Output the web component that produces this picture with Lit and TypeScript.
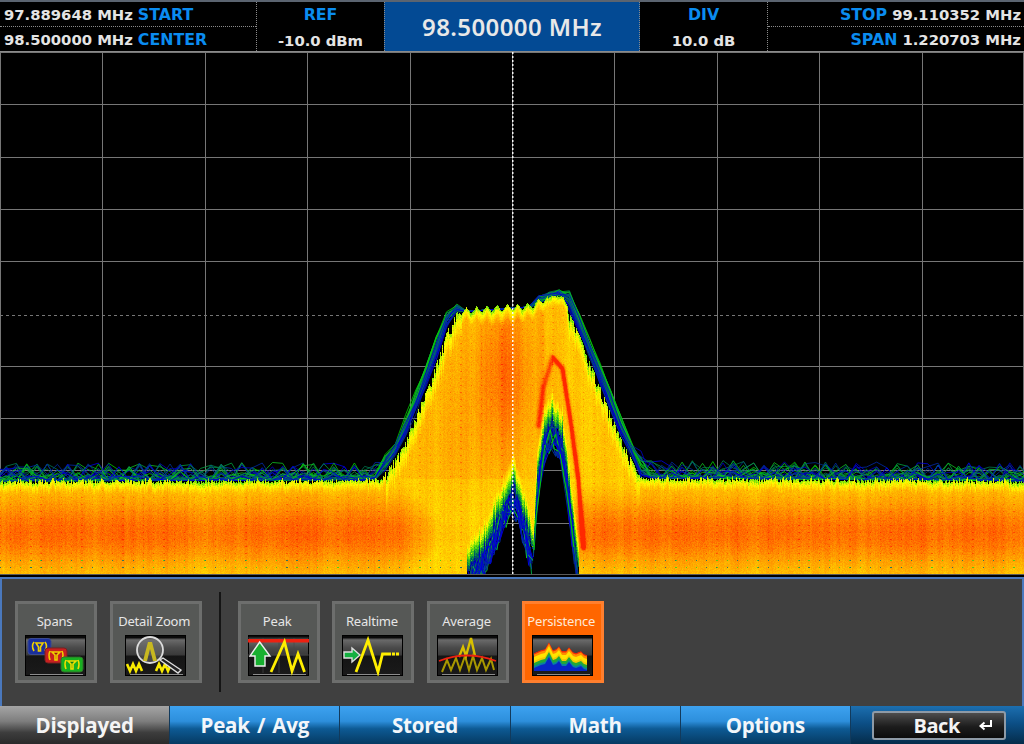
import { LitElement, html, css, svg } from 'lit';
import { customElement } from 'lit/decorators.js';

const PLOT_TOP = 52;
const W = 1024;
const H = 523;

type Pt = [number, number];

const TOP: Pt[] = [[0, 480], [380, 479], [403, 447], [430, 380], [450, 323], [460, 311], [530, 306], [543, 300], [552, 296], [563, 297], [577, 330], [597, 380], [620, 437], [640, 477], [1024, 480]];
const NOTCH: Pt[] = [[466, 575], [487, 547], [503, 507], [513, 487], [520, 507], [533, 553]];
const HOLE: Pt[] = [[533, 553], [537, 480], [543, 440], [552, 423], [562, 440], [567, 480], [573, 530], [579, 575]];
const RED_LINE: Pt[] = [[538, 425], [543, 387], [552, 357], [562, 368], [570, 420], [578, 480], [583, 547]];

function lerpTable(t: Pt[], x: number) {
  if (x <= t[0][0]) return t[0][1];
  for (let i = 1; i < t.length; i++) {
    if (x <= t[i][0]) {
      const k = (x - t[i - 1][0]) / (t[i][0] - t[i - 1][0]);
      return t[i - 1][1] + (t[i][1] - t[i - 1][1]) * k;
    }
  }
  return t[t.length - 1][1];
}

function rng(seed: number) {
  return () => {
    seed = (seed + 0x6d2b79f5) | 0;
    let t = Math.imul(seed ^ (seed >>> 15), 1 | seed);
    t = (t + Math.imul(t ^ (t >>> 7), 61 | t)) ^ t;
    return ((t ^ (t >>> 14)) >>> 0) / 4294967296;
  };
}

const gauss = (v: number) => Math.exp(-v * v);

const STOPS: [number, number, number, number][] = [
  [0, 0, 0, 170],
  [0.14, 0, 130, 70],
  [0.28, 90, 220, 10],
  [0.42, 255, 250, 0],
  [0.72, 255, 150, 0],
  [1, 255, 40, 0],
];

function heatColor(v: number): [number, number, number] {
  if (v <= 0) return [STOPS[0][1], STOPS[0][2], STOPS[0][3]];
  for (let i = 1; i < STOPS.length; i++) {
    if (v <= STOPS[i][0]) {
      const a = STOPS[i - 1];
      const b = STOPS[i];
      const k = (v - a[0]) / (b[0] - a[0]);
      return [a[1] + (b[1] - a[1]) * k, a[2] + (b[2] - a[2]) * k, a[3] + (b[3] - a[3]) * k];
    }
  }
  return [255, 40, 0];
}

function segDist(px: number, py: number, a: Pt, b: Pt) {
  const dx = b[0] - a[0];
  const dy = b[1] - a[1];
  const t = Math.max(0, Math.min(1, ((px - a[0]) * dx + (py - a[1]) * dy) / (dx * dx + dy * dy)));
  return Math.hypot(px - a[0] - t * dx, py - a[1] - t * dy);
}

function drawSpectrum(ctx: CanvasRenderingContext2D) {
  const rand = rng(77);
  ctx.fillStyle = '#000';
  ctx.fillRect(0, 0, W, H);

  // graticule
  ctx.fillStyle = '#767676';
  for (let i = 0; i <= 10; i++) {
    const x = Math.round(i * 102.4);
    ctx.fillRect(Math.min(x, W - 1), 0, 1, H);
  }
  for (let i = 0; i <= 10; i++) {
    const y = Math.round(i * 52.3) - (i === 10 ? 1 : 0);
    if (i === 5) {
      for (let x = 0; x < W; x += 6) ctx.fillRect(x, y + 1, 3, 1);
    } else {
      ctx.fillRect(0, y, W, 1);
    }
  }

  // stray traces above the envelope
  const blues = ['#0000c8', '#0000e0', '#00308c', '#002aa8'];
  const greens = ['#007a50', '#00a040', '#10c020', '#00d000'];
  for (let i = 0; i < 30; i++) {
    const blue = rand() < 0.5;
    const list = blue ? blues : greens;
    const shift = blue ? rand() * 6 : 2 + rand() * 6;
    ctx.strokeStyle = list[Math.floor(rand() * list.length)];
    ctx.lineWidth = 1;
    ctx.globalAlpha = 0.8;
    ctx.beginPath();
    for (let x = -4; x < W + 10; x += 10.24) {
      const jx = x < 500 ? x + shift : x - shift;
      const floor = x < 385 || x > 636;
      const plateau = x > 462 && x < 535;
      const base = lerpTable(TOP, plateau ? x : jx);
      const y = floor ? base + 1 - Math.pow(rand(), 3.5) * 18 : plateau ? base + 1 : base - rand() * 7;
      ctx.lineTo(x, y - PLOT_TOP);
    }
    ctx.stroke();
  }
  ctx.globalAlpha = 1;

  // notch and hole streaks sitting under the density map
  for (let i = 0; i < 50; i++) {
    const t = i < 28 ? NOTCH : HOLE;
    const blue = rand() < 0.7;
    ctx.strokeStyle = (blue ? blues : greens)[Math.floor(rand() * 4)];
    ctx.beginPath();
    for (let x = t[0][0] + rand() * 8; x < t[t.length - 1][0]; x += 3 + rand() * 4) {
      ctx.lineTo(x, lerpTable(t, x) - PLOT_TOP + (rand() - 0.3) * 40);
    }
    ctx.stroke();
  }

  // density map
  const colNoise: number[] = [];
  let walk = 0;
  for (let x = 0; x < W; x++) {
    walk = walk * 0.85 + (rand() - 0.5) * 0.04;
    colNoise.push(walk);
  }
  const img = ctx.getImageData(0, 0, W, H);
  const data = img.data;
  for (let x = 0; x < W; x++) {
    const ripple = x > 445 && x < 548 ? Math.abs(((x % 10.24) / 10.24) * 2 - 1) * 7 - 3.5 : 0;
    const slope = (x > 385 && x < 462) || (x > 566 && x < 640);
    const floorCol = x < 385 || x > 636;
    const top = lerpTable(TOP, x) + ripple + (slope ? Math.pow(rand(), 2) * 11 : floorCol ? 2 - Math.pow(rand(), 2) * 4 + rand() * 3 : rand());
    const inNotch = x > 466 && x < 533;
    const inHole = x >= 533 && x < 579;
    const low = inNotch ? lerpTable(NOTCH, x) : inHole ? lerpTable(HOLE, x) : 999;
    const jag = rand() * 14;
    const stripe = (x + 1) % 10.24 < 1.3;
    const ramp = slope ? 26 : 11;
    for (let py = Math.floor(top); py < PLOT_TOP + H - 1; py++) {
      const dLow = low - py - jag * 0.3;
      if (dLow < 0) continue;
      const dTop = py - top;
      const sig = 0.58 + 0.2 * gauss((x - 505) / 32) * gauss((py - 365) / 80) + 0.07 * gauss((x - 470) / 60) * gauss((py - 430) / 90);
      const wf = x < 400 || x > 585 ? 1 : x < 440 ? 1 - ((x - 400) / 40) * 0.3 : x > 560 ? 0.7 + ((x - 560) / 25) * 0.3 : 0.7;
      const band = (0.53 + 0.29 * gauss((py - 532) / 36)) * wf;
      let v = py > 478 ? Math.max(band, x > 400 && x < 585 ? sig * 0.92 : 0) : sig;
      v = Math.min(v, 0.34 + (dTop / ramp) * 0.3);
      if (dLow < 30) v = Math.min(v, 0.1 + ((dLow - jag * 0.4) / 30) * 0.55);
      v += colNoise[x] + (rand() - 0.5) * 0.09;
      if (stripe && py % 7 === 0 && dTop > 10) v += 0.14;
      if (x > 530 && x < 590 && py > 340) {
        let d = 99;
        for (let i = 1; i < RED_LINE.length; i++) d = Math.min(d, segDist(x, py, RED_LINE[i - 1], RED_LINE[i]));
        const strength = x < 552 ? 0.32 : 0.62;
        v += strength * gauss(d / (x < 552 ? 2.8 : 2.2));
      }
      let c = heatColor(v);
      if (stripe && py > 555 && py < 572 && py % 7 === 0 && !inNotch && !inHole) c = rand() > 0.5 ? [50, 120, 90] : [90, 200, 20];
      const i = ((py - PLOT_TOP) * W + x) * 4;
      data[i] = c[0];
      data[i + 1] = c[1];
      data[i + 2] = c[2];
      data[i + 3] = 255;
    }
  }
  ctx.putImageData(img, 0, 0);

  // the panel image is slightly soft
  ctx.filter = 'blur(0.55px)';
  ctx.drawImage(ctx.canvas, 0, 0);
  ctx.filter = 'none';

  // centre marker
  ctx.fillStyle = 'rgba(255,255,255,.95)';
  for (let y = 0; y < H; y += 4) ctx.fillRect(512, y, 1.5, 2);
  ctx.fillStyle = '#5a5a5a';
  ctx.fillRect(0, H - 1, W, 1);
}

const SPECTRUM_SHAPE = 'M2 18l7-3 4-1 4-7 4 8 3-1 3-3 3 5 4 0 3-4 4 5 3 1 5-2 3 3 3 1v16H2z';
const PERSIST_BANDS: [number, string][] = [
  [0, '#f02808'],
  [1.5, '#ff8c00'],
  [4, '#ffe400'],
  [8, '#f4c800'],
  [10, '#20a838'],
  [13, '#0880a0'],
  [15, '#0824c8'],
];

const icons = {
  spans: svg`
    <rect x="3" y="3.500" width="23" height="16" rx="3" fill="#1a2f9c" stroke="#3a4a90"/>
    <path d="M9 7q-3 4 0 9M20 7q3 4 0 9M11 8h7l-2.500 4v4h-2v-4z" fill="none" stroke="#f0d000" stroke-width="1.600"/>
    <rect x="20" y="13" width="22" height="15" rx="3" fill="#c82020" stroke="#7a2020"/>
    <path d="M25 16q-2 4 0 9M37 16q2 4 0 9M27 17h8l-3 3v5h-2v-5z" fill="#a01010" stroke="#f0d000" stroke-width="1.600"/>
    <rect x="36" y="22" width="22" height="15" rx="3" fill="#18b020" stroke="#30702a"/>
    <path d="M41 25q-2 4 0 9M53 25q2 4 0 9M43 26h8l-3 3v5h-2v-5z" fill="#108018" stroke="#f0e000" stroke-width="1.600"/>`,
  zoom: svg`
    <path d="M2 29l3 7 3-7 3 7 3-7 3 7M31 36l3-7 3 7 3-7 3 7 3-7" fill="none" stroke="#f8ea00" stroke-width="2.600"/>
    <circle cx="25" cy="15" r="13" fill="#777" fill-opacity=".5" stroke="#ddd" stroke-width="1.800"/>
    <path d="M18 26l5-19h4l5 19h-4l-3-12-3 12z" fill="#c8b820"/>
    <path d="M35 25l3-2 18 12-3 3z" fill="#222" stroke="#ddd" stroke-width="1.400"/>`,
  peak: svg`
    <path d="M0 3h61M15 3v35M31 3v35M46 3v35M0 20h61" stroke="#484848" stroke-width=".7"/>
    <rect y="4" width="61" height="3.500" fill="#ee2010"/>
    <path d="M11.700 7L2 21h5v10h10V21h5z" fill="#18b030" stroke="#eee" stroke-width="1.400"/>
    <path d="M23 37L36.500 7 44 36l6-17 6.500 18" fill="none" stroke="#ffee00" stroke-width="2.800"/>`,
  realtime: svg`
    <path d="M14 37L26 5l10 32 4.500-18H46" fill="none" stroke="#ffee00" stroke-width="2.800"/>
    <path d="M46 19h12" stroke="#ffee00" stroke-width="3" stroke-dasharray="3 1"/>
    <path d="M18 20L10 13v4H2v6h8v4z" fill="#14b040" stroke="#ddd" stroke-width="1.400"/>`,
  average: svg`
    <path d="M5 37l5-12 4 10 5-12 4 12 5-14 4 14 4-14 4 14 5-12 4 12 5-11 3 11" fill="none" stroke="#a89800" stroke-width="2"/>
    <path d="M22 22l4-10 3 9 5-18 4 18" fill="none" stroke="#d8c000" stroke-width="2.400"/>
    <path d="M2 26Q30 15 59 26" fill="none" stroke="#ee2010" stroke-width="1.800"/>`,
  persist: svg`
    <defs><clipPath id="pc"><path d=${SPECTRUM_SHAPE}/></clipPath></defs>
    <g clip-path="url(#pc)">
      ${PERSIST_BANDS.map(([dy, col]) => svg`<path d=${SPECTRUM_SHAPE} transform="translate(0 ${dy})" fill=${col}/>`)}
    </g>`,
};

@customElement('scope-tile')
export class ScopeTile extends LitElement {
  static properties = {
    label: {},
    icon: {},
    active: { type: Boolean, reflect: true },
  };
  declare label: string;
  declare icon: keyof typeof icons;
  declare active: boolean;

  static styles = css`
    :host {
      display: flex;
      flex-direction: column;
      align-items: center;
      box-sizing: border-box;
      height: 82px;
      width: 82px;
      padding: 9px 0 0;
      background: #565856;
      border: 3px solid #6d6e6d;
      color: #e6e6e6;
      font: 13px 'Noto Sans', sans-serif;
      letter-spacing: -0.2px;
      white-space: nowrap;
    }
    :host([wide]) {
      width: 92px;
    }
    :host([active]) {
      background: #ff6600;
      border-color: #ff7f2e;
      color: #ffe9d8;
    }
    .label {
      height: 22px;
      line-height: 17px;
      margin-right: 3px;
    }
    .icon {
      width: 61px;
      height: 41px;
      flex: none;
      margin-right: 1px;
      background:
        linear-gradient(#8c8c8c, #8c8c8c) 4px 38px / 53px 1px no-repeat,
        linear-gradient(#0b0b0b 4%, #6a6a6a 10%, #4a4a4a 30%, #3a3a3a 48%, #151515 52%, #1a1a1a 100%);
      border: 1px solid #000;
      box-sizing: border-box;
    }
    svg {
      display: block;
      width: 61px;
      height: 41px;
      margin: -1px;
    }
  `;

  render() {
    return html`
      <div class="label">${this.label}</div>
      <div class="icon"><svg viewBox="0 0 61 41">${icons[this.icon]}</svg></div>
    `;
  }
}

@customElement('app-root')
export class AppRoot extends LitElement {
  static styles = css`
    :host {
      display: flex;
      flex-direction: column;
      width: 1024px;
      height: 744px;
      overflow: hidden;
      background: #000;
      font-family: 'DejaVu Sans', sans-serif;
    }
    .head {
      display: flex;
      flex: none;
      height: 52px;
      box-sizing: border-box;
      border-top: 2px solid #5b6470;
      border-bottom: 1px solid #8a8a8a;
      font-size: 14.800px;
      font-weight: bold;
      color: #e4e4e4;
      white-space: nowrap;
    }
    .head b {
      color: #0a8cf0;
      font-weight: bold;
      font-size: 15.800px;
    }
    .stack {
      width: 256px;
      flex: none;
      display: flex;
      flex-direction: column;
      box-sizing: border-box;
    }
    .stack div {
      flex: 1;
      display: flex;
      align-items: center;
      gap: 5px;
      padding: 1px 4px 0;
    }
    .stack div:first-child {
      border-bottom: 1px dotted #8a8a8a;
    }
    .stack.right div {
      justify-content: flex-end;
      padding-right: 3px;
    }
    .mid {
      width: 128px;
      flex: none;
      display: flex;
      flex-direction: column;
      box-sizing: border-box;
      border-left: 1px dotted #8a8a8a;
      text-align: center;
    }
    .mid.last {
      border-left: none;
      border-right: 1px dotted #8a8a8a;
    }
    .mid div {
      flex: 1;
      line-height: 26px;
    }
    .center {
      width: 256px;
      flex: none;
      box-sizing: border-box;
      border-left: 1px dotted #8a8a8a;
      border-right: 1px dotted #8a8a8a;
      background: #034a94;
      color: #e8e8e8;
      font: 600 24px 'Noto Sans', sans-serif;
      letter-spacing: 0.4px;
      display: flex;
      align-items: center;
      justify-content: center;
    }
    canvas {
      display: block;
      flex: none;
      width: 1024px;
      height: 523px;
    }
    .panel {
      flex: none;
      height: 129px;
      margin-top: 2px;
      box-sizing: border-box;
      border: solid #4a78bd;
      border-width: 2px 2px 0;
      background: #404040;
      display: flex;
      align-items: center;
      padding: 0 13px 1px;
    }
    .group {
      display: flex;
      gap: 12.700px;
    }
    .sep {
      width: 2px;
      height: 100px;
      margin: 0 17px;
      background: #151515;
    }
    .tabs {
      flex: 1;
      display: flex;
      background: linear-gradient(#1c6fb0, #0c4f86 45%, #052c4a);
    }
    .tab {
      width: 170.200px;
      flex: none;
      box-sizing: border-box;
      border-right: 1px solid #123a5c;
      background: linear-gradient(#3da2f0, #2d8fdc 40%, #0d5a94 60%, #063a62);
      color: #f2f6fa;
      font: bold 20.500px/38px 'Open Sans', sans-serif;
      letter-spacing: -0.2px;
      word-spacing: 2px;
      text-align: center;
    }
    .tab.on {
      background: linear-gradient(#a5a5a5, #7e7e7e 40%, #3d3d3d 70%, #2a2a2a);
      color: #f4f4f4;
    }
    .back-wrap {
      flex: 1;
      display: flex;
      align-items: center;
      padding: 0 18px 0 21px;
    }
    .back {
      flex: 1;
      height: 29px;
      box-sizing: border-box;
      border: 2px solid #8e9aa6;
      border-radius: 3px;
      background: linear-gradient(#4d4d4d, #1c1c1c 55%, #0c0c0c);
      color: #f4f4f4;
      font: bold 20px/25px 'Open Sans', sans-serif;
      letter-spacing: -0.4px;
      display: flex;
      align-items: center;
      justify-content: flex-end;
      gap: 18px;
      padding-right: 11px;
    }
    .back svg {
      width: 15px;
      height: 12px;
    }
  `;

  firstUpdated() {
    const canvas = this.renderRoot.querySelector('canvas') as HTMLCanvasElement;
    const ctx = canvas.getContext('2d', { willReadFrequently: true });
    if (ctx) drawSpectrum(ctx);
  }

  render() {
    return html`
      <div class="head">
        <div class="stack">
          <div>97.889648 MHz <b>START</b></div>
          <div>98.500000 MHz <b>CENTER</b></div>
        </div>
        <div class="mid">
          <div><b>REF</b></div>
          <div>-10.0 dBm</div>
        </div>
        <div class="center">98.500000 MHz</div>
        <div class="mid last">
          <div><b>DIV</b></div>
          <div>10.0 dB</div>
        </div>
        <div class="stack right">
          <div><b>STOP</b> 99.110352 MHz</div>
          <div><b>SPAN</b> 1.220703 MHz</div>
        </div>
      </div>
      <canvas width="1024" height="523"></canvas>
      <div class="panel">
        <div class="group">
          <scope-tile label="Spans" icon="spans"></scope-tile>
          <scope-tile label="Detail Zoom" icon="zoom" wide></scope-tile>
        </div>
        <div class="sep"></div>
        <div class="group">
          <scope-tile label="Peak" icon="peak"></scope-tile>
          <scope-tile label="Realtime" icon="realtime"></scope-tile>
          <scope-tile label="Average" icon="average"></scope-tile>
          <scope-tile label="Persistence" icon="persist" active></scope-tile>
        </div>
      </div>
      <div class="tabs">
        <div class="tab on">Displayed</div>
        <div class="tab">Peak / Avg</div>
        <div class="tab">Stored</div>
        <div class="tab">Math</div>
        <div class="tab">Options</div>
        <div class="back-wrap">
          <div class="back">
            Back
            <svg viewBox="0 0 15 12"><path d="M13 1v6H4M6.500 3.500L2.500 7l4 3.500" fill="none" stroke="#fff" stroke-width="2"/></svg>
          </div>
        </div>
      </div>
    `;
  }
}
